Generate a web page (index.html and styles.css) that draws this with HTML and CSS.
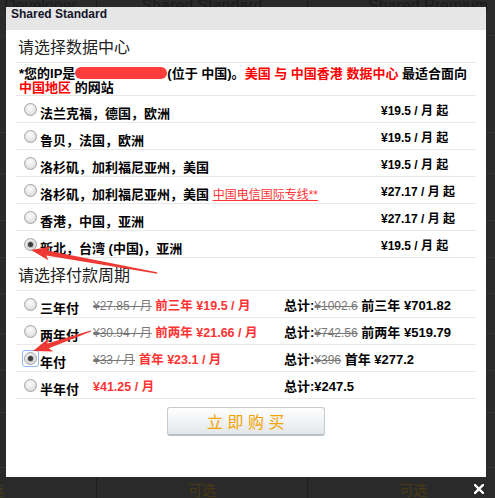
FILE: index.html
```html
<!DOCTYPE html>
<html lang="zh-CN">
<head>
<meta charset="utf-8">
<title>Shared Standard</title>
<link rel="stylesheet" href="styles.css">
</head>
<body>

<!-- pricing table behind the modal -->
<div class="page">
  <div class="plan-grid">
    <div class="plan-head first">Developer</div>
    <div class="plan-head">Shared Standard</div>
    <div class="plan-head last">Shared Premium</div>
  </div>
  <div class="plan-rows">
    <div class="plan-row"></div>
    <div class="plan-row"></div>
    <div class="plan-row"></div>
    <div class="plan-row"></div>
    <div class="plan-row"></div>
    <div class="plan-row"></div>
    <div class="plan-row"></div>
    <div class="plan-row"></div>
    <div class="plan-row"></div>
  </div>
  <div class="plan-grid">
    <div class="plan-foot first">可选</div>
    <div class="plan-foot">可选</div>
    <div class="plan-foot last">可选</div>
  </div>
</div>

<!-- order dialog -->
<div class="dialog">
  <div class="dialog-title">Shared Standard</div>
  <div class="dialog-body">
    <h3 class="section-title">请选择数据中心</h3>
    <p class="ip-note">*您的IP是<span class="ip-mask"></span>(位于 中国)。<span class="hl">美国 与 中国香港 数据中心</span> 最适合面向<br><span class="hl">中国地区</span> 的网站</p>

    <ul class="dc-list">
      <li class="dc-row">
        <span class="opt"><span class="radio"></span><span class="label">法兰克福，德国，欧洲</span></span>
        <span class="price">¥19.5 / 月 起</span>
      </li>
      <li class="dc-row">
        <span class="opt"><span class="radio"></span><span class="label">鲁贝，法国，欧洲</span></span>
        <span class="price">¥19.5 / 月 起</span>
      </li>
      <li class="dc-row">
        <span class="opt"><span class="radio"></span><span class="label">洛杉矶，加利福尼亚州，美国</span></span>
        <span class="price">¥19.5 / 月 起</span>
      </li>
      <li class="dc-row">
        <span class="opt"><span class="radio"></span><span class="label">洛杉矶，加利福尼亚州，美国 <a class="line-link" href="#">中国电信国际专线**</a></span></span>
        <span class="price">¥27.17 / 月 起</span>
      </li>
      <li class="dc-row">
        <span class="opt"><span class="radio"></span><span class="label">香港，中国，亚洲</span></span>
        <span class="price">¥27.17 / 月 起</span>
      </li>
      <li class="dc-row">
        <span class="opt"><span class="radio checked"></span><span class="label">新北，台湾 (中国)，亚洲</span></span>
        <span class="price">¥19.5 / 月 起</span>
      </li>
    </ul>

    <h3 class="section-title">请选择付款周期</h3>

    <ul class="term-list">
      <li class="term-row">
        <span class="opt"><span class="radio"></span><span class="label">三年付</span></span>
        <span class="term-price"><s>¥27.85 / 月</s> <b class="promo">前三年 ¥19.5 / 月</b></span>
        <span class="term-total">总计:<s>¥1002.6</s> 前三年 ¥701.82</span>
      </li>
      <li class="term-row">
        <span class="opt"><span class="radio"></span><span class="label">两年付</span></span>
        <span class="term-price"><s>¥30.94 / 月</s> <b class="promo">前两年 ¥21.66 / 月</b></span>
        <span class="term-total">总计:<s>¥742.56</s> 前两年 ¥519.79</span>
      </li>
      <li class="term-row">
        <span class="opt"><span class="focus-ring"><span class="radio checked"></span></span><span class="label">年付</span></span>
        <span class="term-price"><s>¥33 / 月</s> <b class="promo">首年 ¥23.1 / 月</b></span>
        <span class="term-total">总计:<s>¥396</s> 首年 ¥277.2</span>
      </li>
      <li class="term-row">
        <span class="opt"><span class="radio"></span><span class="label">半年付</span></span>
        <span class="term-price"><b class="promo">¥41.25 / 月</b></span>
        <span class="term-total">总计:¥247.5</span>
      </li>
    </ul>

    <button class="buy" type="button">立即购买</button>
  </div>
</div>

<!-- close control of the modal -->
<svg class="close" width="10" height="10" viewBox="0 0 10 10" aria-label="close">
  <path d="M1 1 L9 9 M9 1 L1 9" stroke="#fff" stroke-width="2.4" stroke-linecap="square"/>
</svg>

<!-- hand-drawn pointer arrows -->
<svg class="marks" width="495" height="498" viewBox="0 0 495 498">
  <polygon fill="#ee3833" points="157,272.3 157.3,273.7 46.3,255.4 48.4,260.3 31,250 50.9,246.5 47.2,250.4"/>
  <polygon fill="#ee3833" points="90.8,330.5 91.2,331.6 48.9,348.2 53.2,351.4 33,351 48.7,338.2 47.3,343.4"/>
</svg>

</body>
</html>
```

FILE: styles.css
```css
* {
  box-sizing: border-box;
}

html,
body {
  margin: 0;
  height: 100%;
  overflow: hidden;
}

body {
  position: relative;
  background: #2a2a2a;
  font-family: "Liberation Sans", "Noto Sans CJK SC", sans-serif;
  color: #000;
}

/* ---------- dimmed pricing table ---------- */

.page {
  margin-top: -4px;
}

.plan-grid {
  display: grid;
  grid-template-columns: 97px 211px 1fr;
}

.plan-head {
  height: 40px;
  line-height: 20px;
  font-size: 16px;
  text-align: center;
  color: #1a1a1a;
  border-right: 1px solid #1e1e1e;
  border-bottom: 1px solid #333;
}

.plan-head.first {
  text-align: left;
  padding-left: 4px;
}

.plan-head.last {
  text-align: left;
  padding-left: 60px;
  border-right: 0;
}

.plan-row {
  border-bottom: 1px solid #353535;
}

.plan-row:nth-child(1) { height: 97px; }
.plan-row:nth-child(2) { height: 41px; }
.plan-row:nth-child(3) { height: 47px; }
.plan-row:nth-child(4) { height: 37px; }
.plan-row:nth-child(5) { height: 36px; }
.plan-row:nth-child(6) { height: 40px; }
.plan-row:nth-child(7) { height: 37px; }
.plan-row:nth-child(8) { height: 42px; }
.plan-row:nth-child(9) { height: 55px; }

.plan-foot {
  height: 42px;
  line-height: 42px;
  font-size: 14px;
  text-align: center;
  color: #4a3914;
  border-right: 1px solid #1e1e1e;
  font-family: "Noto Sans CJK SC", sans-serif;
}

.plan-foot.first {
  text-align: left;
  margin-left: -24px;
}

.plan-foot.last {
  padding-left: 24px;
  border-right: 0;
}

/* ---------- dialog ---------- */

.dialog {
  position: absolute;
  left: 6px;
  top: 7px;
  width: 480px;
  height: 470px;
  background: #fff;
}

.dialog-title {
  height: 23px;
  line-height: 23px;
  padding-left: 5px;
  background: #e6e6e6;
  font: bold 12px "Liberation Sans", sans-serif;
  color: #141428;
}

.dialog-body {
  padding: 0 10px;
}

.section-title {
  margin: 0;
  height: 33px;
  line-height: 32px;
  padding-left: 2px;
  font-size: 16px;
  font-weight: normal;
  font-family: "Noto Sans CJK SC", sans-serif;
  color: #222;
  border-bottom: 1px solid #e8e8e8;
}

.ip-note {
  margin: 0;
  height: 33px;
  padding: 4px 0 0 3px;
  font-size: 13px;
  font-weight: bold;
  line-height: 14px;
  border-bottom: 1px solid #e8e8e8;
}

.ip-mask {
  display: inline-block;
  width: 92px;
  height: 12px;
  vertical-align: -1px;
  border-radius: 6px;
  background: #ff3c3c;
  filter: blur(0.6px);
}

.hl {
  color: #f00;
}

.dc-list,
.term-list {
  margin: 0;
  padding: 0;
  list-style: none;
}

.dc-row {
  display: grid;
  grid-template-columns: 365px 1fr;
  align-items: center;
  height: 27px;
  border-bottom: 1px solid #e8e8e8;
}

.term-row {
  display: grid;
  grid-template-columns: 77px 191px 1fr;
  align-items: center;
  height: 27px;
  border-bottom: 1px solid #e8e8e8;
}

.opt {
  display: flex;
  align-items: center;
  padding-left: 8px;
}

.label {
  margin-left: 3px;
  margin-top: 6px;
  font-size: 13px;
  font-weight: bold;
  white-space: nowrap;
}

.line-link {
  font-size: 12px;
  font-weight: normal;
  color: #f33;
  text-decoration: underline;
}

.price {
  font-size: 12px;
  font-weight: bold;
  white-space: nowrap;
}

/* radio buttons */

.radio {
  position: relative;
  flex: none;
  width: 13px;
  height: 13px;
  border-radius: 50%;
  border: 1px solid #a3a3a3;
  background: radial-gradient(circle at 45% 35%, #fdfdfd 0%, #e6e6e6 55%, #cfcfcf 100%);
}

.radio.checked::after {
  content: "";
  position: absolute;
  left: 3px;
  top: 3px;
  width: 5px;
  height: 5px;
  border-radius: 50%;
  background: #3c3c3c;
  box-shadow: 0 0 1px 1px rgba(80, 80, 80, 0.35);
}

.focus-ring {
  display: flex;
  margin-left: -2px;
  margin-right: -2px;
  padding: 1px;
  border: 1px solid #8db9f2;
  border-radius: 3px;
}

/* payment terms */

.term-price,
.term-total {
  white-space: nowrap;
  font-size: 13px;
}

.term-price .promo {
  font-size: 12.5px;
}

.term-total {
  font-weight: bold;
}

s {
  font-size: 12px;
  font-weight: normal;
  color: #777;
}

.promo {
  color: #f33;
}

/* buy button */

.buy {
  display: block;
  margin: 8px auto 0;
  width: 158px;
  height: 29px;
  padding: 0 0 0 4px;
  border: 1px solid #c6cbd1;
  border-bottom: 2px solid #b9bfc6;
  border-radius: 3px;
  background: linear-gradient(#ffffff, #eef0f2 60%, #e4e7ea);
  font-family: "Noto Sans CJK SC", sans-serif;
  font-size: 16px;
  letter-spacing: 4.5px;
  color: #f4a200;
  cursor: pointer;
}

/* overlay pieces */

.close {
  position: absolute;
  left: 474px;
  top: 484px;
}

.marks {
  position: absolute;
  left: 0;
  top: 0;
  pointer-events: none;
}
```
